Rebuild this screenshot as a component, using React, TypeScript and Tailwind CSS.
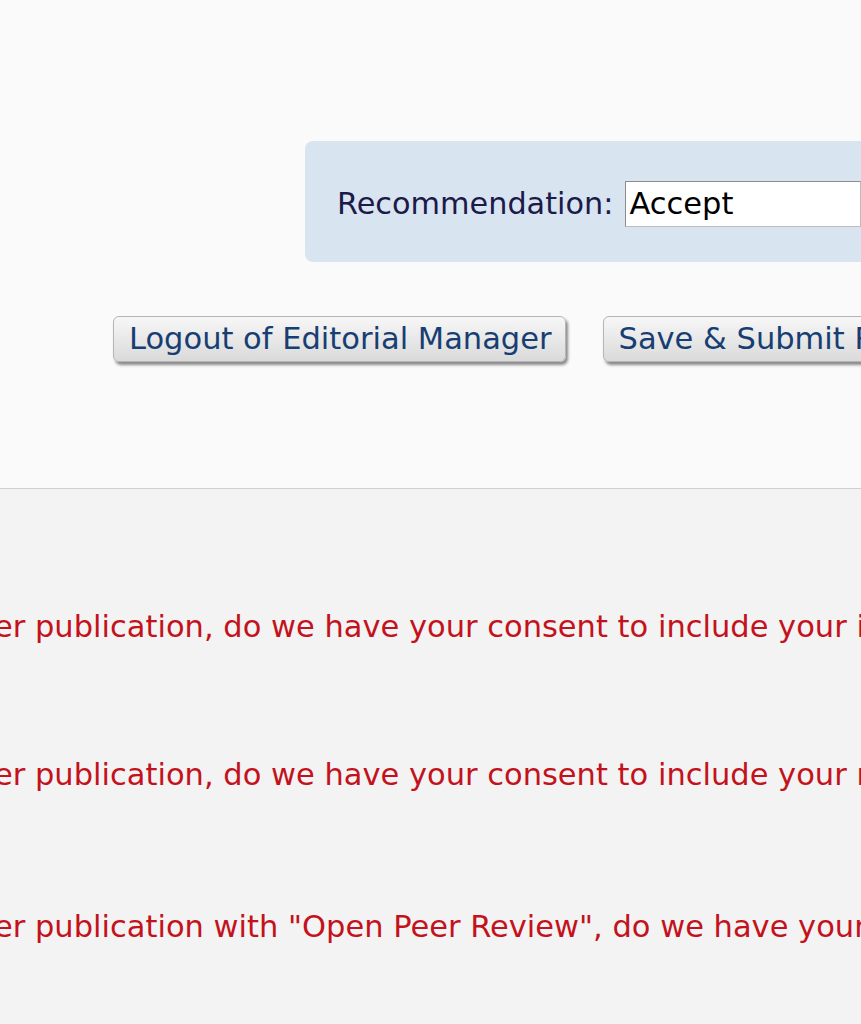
import React from "react";

export default function App() {
  return (
    <div className="w-[861px] h-[1024px] overflow-hidden bg-[#f3f3f3] font-['DejaVu_Sans','Verdana',sans-serif]">
      <div className="h-[489px] bg-[#fafafa] border-b border-[#cfcfcf] flex flex-col">
        <div className="mt-[141px] ml-[305px] h-[121px] bg-[#d9e4f1] rounded-l-[8px] flex items-center pl-[32px] pt-[4px]">
          <span className="text-[30.3px] leading-[36px] text-[#1b1a4a] whitespace-nowrap">Recommendation:</span>
          <div className="ml-[12px] h-[46px] flex-1 bg-white border border-[#bdbdbd] border-t-[#8c8c8c] border-l-[#8c8c8c] flex items-center pl-[3px]">
            <span className="text-[30.5px] leading-[36px] text-black">Accept</span>
          </div>
        </div>
        <div className="mt-[54px] ml-[113px] flex gap-[37px] whitespace-nowrap">
          <button className="h-[46px] pl-[15px] pr-[13px] rounded-[6px] border border-[#b5b5b5] bg-gradient-to-b from-[#f7f7f7] to-[#dadada] shadow-[2px_3px_3px_rgba(0,0,0,0.45)] text-[30.5px] leading-[36px] text-[#173e73] shrink-0">
            Logout of Editorial Manager
          </button>
          <button className="h-[46px] pl-[15px] pr-[13px] rounded-[6px] border border-[#b5b5b5] bg-gradient-to-b from-[#f7f7f7] to-[#dadada] shadow-[2px_3px_3px_rgba(0,0,0,0.45)] text-[30.5px] leading-[36px] text-[#173e73] shrink-0">
            Save &amp; Submit Review
          </button>
        </div>
      </div>
      <div className="flex flex-col text-[30.5px] leading-[36px] text-[#c3121c] whitespace-nowrap">
        <div className="mt-[120px] -ml-[6px]">er publication, do we have your consent to include your identity</div>
        <div className="mt-[112px] -ml-[6px]">er publication, do we have your consent to include your review</div>
        <div className="mt-[116px] -ml-[6px]">
          er publication with "Open Peer Review", do we have your consent
        </div>
      </div>
    </div>
  );
}
